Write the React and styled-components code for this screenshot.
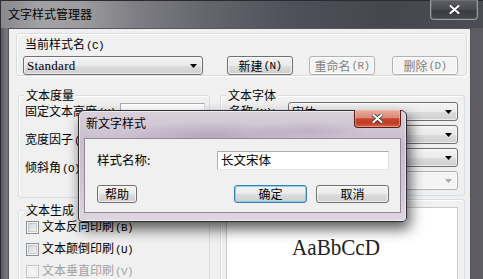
import React from "react";
import styled, { createGlobalStyle } from "styled-components";

const GlobalStyle = createGlobalStyle`
  *, *::before, *::after { box-sizing: border-box; }
  html, body { margin: 0; padding: 0; background: #4a4a52; overflow: hidden; }
  body {
    font-family: "Noto Sans CJK SC", "Liberation Sans", sans-serif;
    font-size: 12px;
    color: #000;
  }
`;

const btnFace = "linear-gradient(#f2f2f2 0%, #ebebeb 50%, #dddddd 51%, #cfcfcf 100%)";

const Window = styled.div`
  position: relative;
  width: 483px;
  height: 279px;
  overflow: hidden;
  display: flex;
  flex-direction: column;
  background: linear-gradient(90deg, #5a5a60 0%, #74747a 1%, #6c6c72 60%, #5c5c62 100%);
  border-left: 1px solid #2c2c32;
`;

const TitleBar = styled.div`
  height: 28px;
  display: flex;
  align-items: flex-start;
  margin-left: -1px;
  border-top: 1px solid #2a2a30;
  background: linear-gradient(
    90deg,
    #88888c 0%,
    #a2a2a4 8%,
    #9c9c9e 17%,
    #7e7e84 28%,
    #66666e 42%,
    #50505a 60%,
    #46464e 80%,
    #4c4c54 100%
  );
`;

const TitleText = styled.div`
  padding: 5px 0 0 8px;
  font-size: 12px;
  line-height: 16px;
  color: #000;
`;

const CloseBox = styled.div`
  width: ${(p) => p.$w}px;
  height: ${(p) => p.$h}px;
  margin: -1px ${(p) => p.$mr}px 0 auto;
  display: flex;
  align-items: center;
  justify-content: center;
  border: 1px solid ${(p) => (p.$red ? "#5b1e16" : "#9a9aa2")};
  border-top: none;
  border-radius: 0 0 4px 4px;
  background: ${(p) =>
    p.$red
      ? "linear-gradient(#e9aa9c 0%, #dc8a78 45%, #c5452d 52%, #c13b22 78%, #d86a4e 100%)"
      : "linear-gradient(#5e5e66 0%, #4a4a52 50%, #3c3c44 51%, #44444c 100%)"};
  box-shadow: inset 0 0 0 1px ${(p) => (p.$red ? "rgba(255,200,190,0.45)" : "rgba(255,255,255,0.12)")};
`;

const Body = styled.div`
  flex: 1;
  display: flex;
  padding: 0 12px 0 7px;
  min-height: 0;
`;

const Client = styled.div`
  flex: 1;
  background: #f0f0f0;
  border: 1px solid #55555c;
  border-bottom: none;
  display: flex;
  flex-direction: column;
`;

const Panel = styled.div`
  margin: 4px 3px 0 7px;
  height: 47px;
  border: 1px solid #d9dcde;
  border-radius: 3px;
  box-shadow: inset 1px 1px 0 #fff, 1px 1px 0 #fff;
  padding: 2px 0 0 7px;
`;

const Label = styled.div`
  line-height: 16px;
  margin-left: ${(p) => p.$ml || 0}px;
  color: ${(p) => (p.$disabled ? "#a0a0a0" : "#000")};
  white-space: nowrap;
  font-size: ${(p) => p.$size || 12}px;
`;

const Key = styled.span`
  font-family: "Liberation Mono", monospace;
  font-size: 11px;
  letter-spacing: -0.6px;
  margin-left: 1px;
`;

const PanelRow = styled.div`
  display: flex;
  align-items: center;
  margin-top: 2px;
  margin-left: -1px;
`;

const Combo = styled.div`
  display: flex;
  align-items: center;
  width: ${(p) => p.$w}px;
  height: 19px;
  margin-left: ${(p) => (p.$auto ? "auto" : "0")};
  margin-right: ${(p) => p.$mr || 0}px;
  padding: 0 5px 0 3px;
  border: 1px solid ${(p) => (p.$disabled ? "#adb2b5" : "#707070")};
  border-radius: 3px;
  background: ${(p) => (p.$disabled ? "#f4f4f4" : btnFace)};
  box-shadow: inset 0 0 0 1px rgba(255, 255, 255, 0.6);
`;

const ComboText = styled.span`
  flex: 1;
  font-family: ${(p) => (p.$latin ? '"Liberation Serif", serif' : "inherit")};
  font-size: ${(p) => (p.$latin ? 13 : 12)}px;
  letter-spacing: ${(p) => (p.$latin ? "0.3px" : "0")};
  line-height: 16px;
`;

const Button = styled.div`
  width: ${(p) => p.$w}px;
  height: ${(p) => p.$h || 19}px;
  margin-left: ${(p) => (p.$ml === "auto" ? "auto" : `${p.$ml || 0}px`)};
  display: flex;
  align-items: center;
  justify-content: center;
  border: 1px solid ${(p) => (p.$default ? "#3c7fb1" : p.$disabled ? "#adb2b5" : "#707070")};
  border-radius: 3px;
  background: ${(p) => (p.$disabled ? "#f4f4f4" : btnFace)};
  box-shadow: inset 0 0 0 1px
    ${(p) => (p.$default ? "rgba(90, 205, 240, 0.75)" : "rgba(255, 255, 255, 0.7)")};
  color: ${(p) => (p.$disabled ? "#838383" : "#000")};
  font-size: 12px;
  line-height: 16px;
  white-space: nowrap;
`;

const Columns = styled.div`
  display: flex;
  gap: 10px;
  margin: 19px 0 0 9px;
`;

const Column = styled.div`
  display: flex;
  flex-direction: column;
  width: ${(p) => p.$w}px;
`;

const Group = styled.div`
  height: ${(p) => p.$h}px;
  margin-top: ${(p) => p.$mt || 0}px;
  border: 1px solid #d5dfe5;
  border-radius: 3px;
  box-shadow: inset 1px 1px 0 #fff;
  display: flex;
  flex-direction: column;
  flex-shrink: 0;
`;

const Caption = styled.div`
  width: fit-content;
  margin: -8px 0 0 5px;
  padding: 0 2px;
  background: #f0f0f0;
  line-height: 14px;
  font-size: 12px;
`;

const Rows = styled.div`
  display: flex;
  flex-direction: column;
  gap: ${(p) => p.$gap}px;
  margin-top: ${(p) => p.$mt || 0}px;
  padding-left: ${(p) => p.$pl}px;
`;

const Row = styled.div`
  display: flex;
  align-items: center;
  height: ${(p) => p.$h}px;
`;

const Field = styled.div`
  width: 85px;
  height: 18px;
  margin: 0 4px 0 auto;
  background: #fff;
  border: 1px solid #abadb3;
  border-right-color: #dbdfe6;
  border-bottom-color: #e3e9ef;
`;

const Check = styled.div`
  width: 13px;
  height: 13px;
  flex-shrink: 0;
  margin-right: 3px;
  border: 1px solid ${(p) => (p.$disabled ? "#c4c4c4" : "#8e8f8f")};
  background: ${(p) =>
    p.$disabled ? "#f4f4f4" : "linear-gradient(135deg, #cbcdd0 0%, #e6e7e8 55%, #f6f6f6 100%)"};
  box-shadow: inset 0 0 0 1px #f4f4f4,
    inset 0 0 0 2px ${(p) => (p.$disabled ? "#eaeaea" : "rgba(170,175,182,0.5)")};
`;

const Preview = styled.div`
  flex: 1;
  margin: 7px 6px 0 5px;
  background: #fff;
  border: 1px solid #c6c9cc;
  border-bottom: none;
  display: flex;
  justify-content: center;
  padding: 25px 12px 0 0;
`;

const Sample = styled.div`
  display: inline-block;
  font-family: "Liberation Serif", serif;
  font-size: 24px;
  line-height: 28px;
  height: 28px;
  transform: scaleX(0.88);
  color: #222;
`;

/* the modal "new text style" dialog floating over the manager */
const Dialog = styled.div`
  position: absolute;
  left: 77px;
  top: 110px;
  width: 329px;
  height: 112px;
  display: flex;
  flex-direction: column;
  padding: 0 5px 8px;
  border: 1px solid #2e2c34;
  border-radius: 6px 6px 4px 4px;
  background:
    radial-gradient(ellipse 90px 14px at 40% 22%, rgba(120, 100, 135, 0.28), transparent),
    radial-gradient(ellipse 60px 10px at 70% 18%, rgba(130, 110, 140, 0.22), transparent),
    linear-gradient(180deg, #d9d0db 0%, #c9bdcc 30%, #cfc5d2 65%, #ddd6df 100%);
  box-shadow: inset 0 0 0 1px rgba(255, 255, 255, 0.55), 3px 7px 14px rgba(0, 0, 0, 0.65);
`;

const DialogHead = styled.div`
  height: 27px;
  display: flex;
  align-items: flex-start;
`;

const DialogTitle = styled.div`
  margin-left: 2px;
  font-size: 12px;
  line-height: 24px;
`;

const DialogClient = styled.div`
  flex: 1;
  display: flex;
  flex-direction: column;
  padding: 11px 11px 0 12px;
  background: #f0f0f0;
  border: 1px solid #8e8a98;
`;

const DialogRow = styled.div`
  display: flex;
  align-items: center;
  height: 18px;
  margin-top: ${(p) => p.$mt || 0}px;
`;

const TextBox = styled.div`
  width: 172px;
  height: 19px;
  margin-left: auto;
  padding-left: 3px;
  background: #fff;
  border: 1px solid #abadb3;
  border-right-color: #dbdfe6;
  border-bottom-color: #e3e9ef;
  font-size: 12.5px;
  line-height: 16px;
`;

const Arrow = ({ disabled }) => (
  <svg width="7" height="4" viewBox="0 0 7 4">
    <polygon points="0,0 7,0 3.5,4" fill={disabled ? "#a8a8a8" : "#000"} />
  </svg>
);

const CloseGlyph = () => (
  <svg width="11" height="9" viewBox="0 0 11 9">
    <path d="M1.5 1 L9.5 8 M9.5 1 L1.5 8" stroke="#2a2a2a" strokeWidth="3.6" strokeLinecap="round" />
    <path d="M1.5 1 L9.5 8 M9.5 1 L1.5 8" stroke="#fff" strokeWidth="2.2" strokeLinecap="round" />
  </svg>
);

const metricRows = [
  ["固定文本高度", "H"],
  ["宽度因子", "W"],
  ["倾斜角", "O"],
];

const checkRows = [
  ["文本反向印刷", "B", false],
  ["文本颠倒印刷", "U", false],
  ["文本垂直印刷", "V", true],
];

const fontRows = [
  ["名称", "N", "宋体", false],
  ["字体样式", "Y", "常规", false],
  ["字体高度", "T", "0.0000", false],
  ["大字体", "B", "", true],
];

export default function App() {
  return (
    <>
      <GlobalStyle />
      <Window>
        <TitleBar>
          <TitleText>文字样式管理器</TitleText>
          <CloseBox $w={48} $h={20} $mr={5}>
            <CloseGlyph />
          </CloseBox>
        </TitleBar>
        <Body>
          <Client>
            <Panel>
              <Label $ml={1}>
                当前样式名<Key>(C)</Key>
              </Label>
              <PanelRow>
                <Combo $w={180}>
                  <ComboText $latin>Standard</ComboText>
                  <Arrow />
                </Combo>
                <Button $w={66} $ml={24}>
                  新建<Key>(N)</Key>
                </Button>
                <Button $w={66} $ml={16} $disabled>
                  重命名<Key>(R)</Key>
                </Button>
                <Button $w={66} $ml={17} $disabled>
                  删除<Key>(D)</Key>
                </Button>
              </PanelRow>
            </Panel>

            <Columns>
              <Column $w={192}>
                <Group $h={103}>
                  <Caption>文本度量</Caption>
                  <Rows $gap={8} $pl={6}>
                    {metricRows.map(([text, key]) => (
                      <Row key={key} $h={20}>
                        <Label>
                          {text}
                          <Key>({key})</Key>
                        </Label>
                        <Field />
                      </Row>
                    ))}
                  </Rows>
                </Group>
                <Group $h={100} $mt={12}>
                  <Caption>文本生成</Caption>
                  <Rows $gap={0} $mt={-1} $pl={7}>
                    {checkRows.map(([text, key, disabled]) => (
                      <Row key={key} $h={22}>
                        <Check $disabled={disabled} />
                        <Label $disabled={disabled}>
                          {text}
                          <Key>({key})</Key>
                        </Label>
                      </Row>
                    ))}
                  </Rows>
                </Group>
              </Column>

              <Column $w={245}>
                <Group $h={101}>
                  <Caption>文本字体</Caption>
                  <Rows $gap={4} $mt={0} $pl={8}>
                    {fontRows.map(([text, key, value, disabled]) => (
                      <Row key={key} $h={19}>
                        <Label $disabled={disabled}>
                          {text}
                          <Key>({key})</Key>:
                        </Label>
                        <Combo $w={170} $auto $mr={6} $disabled={disabled}>
                          <ComboText>{value}</ComboText>
                          <Arrow disabled={disabled} />
                        </Combo>
                      </Row>
                    ))}
                  </Rows>
                </Group>
                <Group $h={100} $mt={3}>
                  <Preview>
                    <Sample>AaBbCcD</Sample>
                  </Preview>
                </Group>
              </Column>
            </Columns>
          </Client>
        </Body>

        <Dialog>
          <DialogHead>
            <DialogTitle>新文字样式</DialogTitle>
            <CloseBox $w={47} $h={18} $mr={0} $red>
              <CloseGlyph />
            </CloseBox>
          </DialogHead>
          <DialogClient>
            <DialogRow $mt={1}>
              <Label $size={12.5}>样式名称:</Label>
              <TextBox>长文宋体</TextBox>
            </DialogRow>
            <DialogRow $mt={16}>
              <Button $w={40} $h={18}>
                帮助
              </Button>
              <Button $w={73} $h={18} $ml="auto" $default>
                确定
              </Button>
              <Button $w={73} $h={18} $ml={9}>
                取消
              </Button>
            </DialogRow>
          </DialogClient>
        </Dialog>
      </Window>
    </>
  );
}
